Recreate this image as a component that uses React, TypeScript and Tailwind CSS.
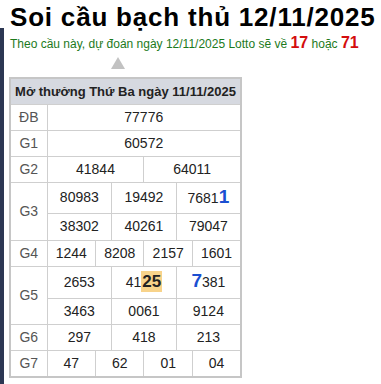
import React from "react";

type Cell = React.ReactNode;

const Blue = ({ children }: { children: React.ReactNode }) => (
  <span className="text-[19px] font-bold text-[#1b4fd1] leading-none">{children}</span>
);

const Hl = ({ children }: { children: React.ReactNode }) => (
  <span className="bg-[#f8d38a] px-[1px] py-[1px] text-[17px] font-bold leading-none">{children}</span>
);

const td = "border border-[#cfcfcf] text-center text-[14px] text-[#222] p-0";
const label = "border border-[#cfcfcf] text-center text-[14px] text-[#555] p-0";

function Row({ name, cells, span, h = "h-[26px]" }: { name?: string; cells: Cell[]; span: number; h?: string }) {
  return (
    <tr className={h}>
      {name !== undefined && <td className={label}>{name}</td>}
      {cells.map((c, i) => (
        <td key={i} colSpan={span} className={td}>
          {c}
        </td>
      ))}
    </tr>
  );
}

export default function App() {
  return (
    <div className="flex min-h-[384px] bg-white font-['Liberation_Sans',Arial,sans-serif]">
      <div className="mt-[28px] w-[4px] shrink-0 bg-[#2c3753]" />
      <div className="pl-[6px] pt-[2px]">
        <h1 className="text-[26px] font-bold leading-[30px] tracking-[0.8px] text-black">Soi cầu bạch thủ 12/11/2025</h1>
        <p className="mt-[2px] text-[12px] leading-[18px] text-[#1c7a1c]">
          Theo cầu này, dự đoán ngày 12/11/2025 Lotto sẽ về{" "}
          <span className="text-[16px] font-bold text-[#d40d0d]">17</span> hoặc{" "}
          <span className="text-[16px] font-bold text-[#d40d0d]">71</span>
        </p>
        <div className="ml-[101px] mt-[4px] h-0 w-0 border-x-[7px] border-b-[12px] border-x-transparent border-b-[#c2c2c2]" />
        <table className="-ml-[1px] mt-[8px] w-[233px] table-fixed border-collapse border-2 border-[#c6c6c6]">
          <colgroup>
            <col className="w-[37px]" />
            {Array.from({ length: 12 }).map((_, i) => (
              <col key={i} />
            ))}
          </colgroup>
          <tbody>
            <tr className="h-[26px]">
              <th colSpan={13} className="border border-[#cfcfcf] bg-[#d6d9e0] p-0 text-[13px] font-bold text-[#222]">
                Mở thưởng Thứ Ba ngày 11/11/2025
              </th>
            </tr>
            <Row name="ĐB" span={12} cells={["77776"]} />
            <Row name="G1" span={12} cells={["60572"]} />
            <Row name="G2" span={6} cells={["41844", "64011"]} />
            <tr className="h-[31px]">
              <td rowSpan={2} className={label}>G3</td>
              <td colSpan={4} className={td}>80983</td>
              <td colSpan={4} className={td}>19492</td>
              <td colSpan={4} className={td}>
                7681<Blue>1</Blue>
              </td>
            </tr>
            <Row span={4} h="h-[27px]" cells={["38302", "40261", "79047"]} />
            <Row name="G4" span={3} cells={["1244", "8208", "2157", "1601"]} />
            <tr className="h-[32px]">
              <td rowSpan={2} className={label}>G5</td>
              <td colSpan={4} className={td}>2653</td>
              <td colSpan={4} className={td}>
                41<Hl>25</Hl>
              </td>
              <td colSpan={4} className={td}>
                <Blue>7</Blue>381
              </td>
            </tr>
            <Row span={4} cells={["3463", "0061", "9124"]} />
            <Row name="G6" span={4} cells={["297", "418", "213"]} />
            <Row name="G7" span={3} h="h-[27px]" cells={["47", "62", "01", "04"]} />
          </tbody>
        </table>
      </div>
    </div>
  );
}
